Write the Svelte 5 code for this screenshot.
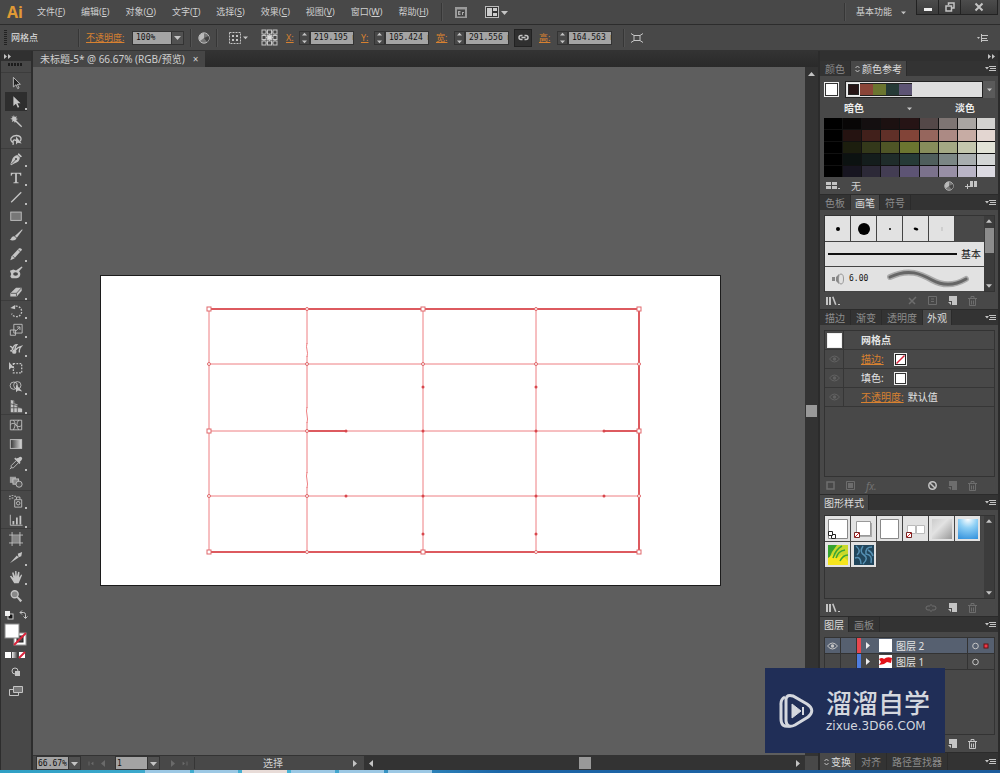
<script>
  const menus = [
    ['文件', 'F'],
    ['编辑', 'E'],
    ['对象', 'O'],
    ['文字', 'T'],
    ['选择', 'S'],
    ['效果', 'C'],
    ['视图', 'V'],
    ['窗口', 'W'],
    ['帮助', 'H'],
  ];

  let opacity = $state('100%');
  let zoom = $state('66.67%');
  let page = $state('1');
  let tool = $state('direct');

  const toolGroups = [
    [
      { id: 'select', label: '选择工具', icon: '<path class="o" style="fill:#222" d="M5 1.5v11l3-2.5 2 4.500 1.500-.8-2-4.200h3.500z"/>' },
      { id: 'direct', label: '直接选择工具', more: true, icon: '<path d="M5 1.500v11l3-2.500 2 4.500 1.700-.8-2-4.200h3.500z"/>' },
      { id: 'wand', label: '魔棒工具', icon: '<path d="M5.500 1l1 2.300 2.500-.8-1 2.300 2.200 1-2.200 1 .8 1L15 14l-1 1-6.300-6-1.200 1-.8-2-2.500 1 .8-2.300L1.500 5.500l2.500-.8-1-2.200 2 .7z"/>' },
      { id: 'lasso', label: '套索工具', icon: '<path class="s w" d="M5 11C2 10 1.500 7 2.500 5.500 5 2 12 2 13.500 5.500c.8 2-.5 4-1.500 4M5 11c-1.500-3 2-4 3-2M5 11l-.5 2.500"/><path d="M8 4v9l2-1.800 4.500.8z"/>' },
    ],
    [
      { id: 'pen', label: '钢笔工具', more: true, icon: '<path d="M11 1l4 4-2 1-3-3zM9.500 3.500l3 3C12 10 10 12 6 13l-3.500 2-1-1L3 10.500C4 6.500 6 4 9.500 3.500z"/><path style="stroke:#484848" class="s" d="M2.500 14L8 8.500"/><circle cx="8" cy="8" r="1.200" fill="#484848"/>' },
      { id: 'type', label: '文字工具', more: true, icon: '<path d="M2 2h12v3.500h-1Q12.800 3.200 11 3.200H9V12q0 1.200 2 1.200v.8H5v-.8q2 0 2-1.200V3.200H5Q3.200 3.200 3 5.500H2z"/>' },
      { id: 'line', label: '直线段工具', more: true, icon: '<path class="s w" d="M2.500 14L14 2.500"/>' },
      { id: 'rect', label: '矩形工具', more: true, icon: '<rect class="s" x="2" y="3.500" width="12" height="9.500" style="fill:#777"/>' },
      { id: 'brush', label: '画笔工具', icon: '<path d="M15 1.500l.5.8L9 11 6.700 9zM6 9.500L8.500 11.800C7.500 14.500 4 15 .8 13.500 3 13 2.500 9 6 9.500z"/>' },
      { id: 'pencil', label: '铅笔工具', more: true, icon: '<path d="M11.500 1.500q2-.8 3.500 1.500l-9 10-4.500 2L3 10.500z"/><path class="s" style="stroke:#555" d="M4 10l2.500 2.500M10.500 3l3 3"/>' },
      { id: 'blob', label: '斑点画笔工具', icon: '<path d="M1 5.500l4-1.500 3 1 6.500-4.500 1 1-4 4.500c3 3 1 8-3 8H3L1.500 12l1-3z"/><ellipse cx="7.500" cy="9" rx="2.800" ry="2" fill="#484848"/>' },
      { id: 'eraser', label: '橡皮擦工具', more: true, icon: '<path d="M8 3h6.500v3.500L9 13H1.500V9.500z"/><path class="s" style="stroke:#555" d="M2 9.500h6.500L14 3.500M8.500 9.500V13"/>' },
    ],
    [
      { id: 'rotate', label: '旋转工具', more: true, icon: '<path class="s w" stroke-dasharray="2 1.500" d="M4.500 4a6 6 0 1 1-1.500 7"/><path d="M1.500 4.500L7 1v5z"/>' },
      { id: 'scale', label: '比例缩放工具', more: true, icon: '<path class="s" d="M5.500 1.500h9.500v10H5.500zM1.500 8h6v6h-6zM8 9l4-4M9 4.500h3.500V8"/>' },
      { id: 'width', label: '宽度工具', more: true, icon: '<path class="s w" d="M1 5q3 0 3 4 1-6 5-6-3 4-2 7 2-4 7-5-3 3-2 7"/><circle cx="6" cy="11" r="2.500"/><circle cx="2.500" cy="10" r="1.200"/>' },
      { id: 'free', label: '自由变换工具', icon: '<path d="M0 1v9l2.500-2.200 4 .7z"/><path class="s w" stroke-dasharray="2 1.500" d="M5 3h9.500v10.500H5z"/>' },
      { id: 'builder', label: '形状生成器工具', more: true, icon: '<circle class="s" cx="5.500" cy="6.500" r="4.200"/><circle class="s" cx="9.500" cy="6" r="4.200"/><path d="M8 5v9l2.200-2 5 1z"/>' },
      { id: 'persp', label: '透视网格工具', more: true, icon: '<path d="M2 1l4 1v3l4 1v3l5 2v4H2z"/><path class="s" style="stroke:#555" d="M2 5.500l8 2M2 10h12M5.500 2v13M9.500 6v9"/>' },
    ],
    [
      { id: 'mesh', label: '网格工具', icon: '<path class="s" d="M1.500 2.500h13v11h-13zM1.500 8q3-4 6.500 0t6.500 0M5 2.500q4 4 0 11M11 2.500q-4 5 0 11"/>' },
      { id: 'grad', label: '渐变工具', icon: '<defs><linearGradient id="tg"><stop stop-color="#333"/><stop offset="1" stop-color="#ddd"/></linearGradient></defs><rect class="s" x="1.500" y="3" width="13" height="10" style="fill:url(#tg)"/>' },
      { id: 'eye', label: '吸管工具', more: true, icon: '<path d="M11 2q2-2 3.500-.5t-.5 3.500l-1.800 1.800 1 1-1.200 1.200-6-6 1.200-1.200 1 1z"/><path class="s" d="M8 5.500L2.500 11v2.500H5L10.500 8M2.500 13.500L1 15"/>' },
      { id: 'blend', label: '混合工具', icon: '<rect x="1" y="2" width="7" height="7" opacity=".7"/><rect class="s" x="4.500" y="4.500" width="6.500" height="6" style="fill:#888"/><circle class="s" cx="11.500" cy="10.500" r="3.500" style="fill:#555"/>' },
    ],
    [
      { id: 'spray', label: '符号喷枪工具', more: true, icon: '<path class="s" d="M6.500 6.500h8V15h-8zM8.500 6V3.500h4V6"/><circle class="s" cx="10.500" cy="10.500" r="2"/><path d="M0 2h2v1H0zM3 1h2v1H3zM3 4h2v1H3zM6 2h2v1H6zM0 5h2v1H0z"/>' },
      { id: 'graph', label: '柱形图工具', more: true, icon: '<path class="s" d="M1.500 2v12h14"/><path d="M4 9h2v4H4zM8 5h2v8H8zM12 3h2v10h-2z"/>' },
    ],
    [
      { id: 'board', label: '画板工具', icon: '<rect x="4" y="4" width="9" height="8" opacity=".5"/><path class="s" d="M3.500 0v16M12.500 0v16M0 3.500h16M0 12.500h16"/>' },
      { id: 'slice', label: '切片工具', more: true, icon: '<path d="M10 3l5-2-1 5-3 1zM9 5l2 2.500L1 14z"/>' },
      { id: 'hand', label: '抓手工具', more: true, icon: '<path d="M1 7l1.500-.5L5 9 3.500 3 5 2.500 7 7.500V1h1.500L9 7.500 10.500 2l1.500.5-.5 6L14 5l1 .8-2.500 6L11 15H6z"/>' },
      { id: 'zoom', label: '缩放工具', icon: '<circle class="s w" cx="6.500" cy="6" r="4" style="fill:#888"/><path d="M8.500 9.500l1.500-1.200L15 13l-2 2z"/>' },
    ],
  ];

  const fields = [
    { id: 'x', label: 'X:', value: '219.195 mm' },
    { id: 'y', label: 'Y:', value: '105.424 mm' },
    { id: 'w', label: '宽:', value: '291.556 mm', cjk: true, link: true },
    { id: 'h', label: '高:', value: '164.563 mm', cjk: true },
  ];

  const base = ['#261415', '#8a4538', '#6b7530', '#263a37', '#5d5474'];
  const shades = [
    ['#000', '#080606', '#140f10', '#1c1111', '#261415', '#544848', '#7e7573', '#a9a5a2', '#d3d2d0'],
    ['#000', '#251311', '#41201b', '#603028', '#824438', '#96665d', '#ac8a84', '#c7aca4', '#e3d6d1'],
    ['#000', '#1c1e0e', '#33381a', '#4f5526', '#6b7530', '#878d5b', '#a4a984', '#c4c7ae', '#e2e3d7'],
    ['#000', '#0c1211', '#141d1c', '#1f2c2a', '#263a37', '#4f5e5c', '#7b8685', '#a8adaf', '#d3d5d5'],
    ['#000', '#171520', '#2c2937', '#433d53', '#5d5474', '#7b728c', '#988fa6', '#b9b4c6', '#dcdae2'],
  ];

  const layers = [
    { name: '图层 2', color: '#e8474f', on: true },
    { name: '图层 1', color: '#4f7de0', art: true },
  ];

  // mesh geometry, relative to the artboard
  const cols = [108, 206, 322, 435, 538];
  const rows = [33, 88, 155, 220, 276];
  const anchors = [
    [108, 33], [322, 33], [538, 33],
    [108, 155], [538, 155],
    [108, 276], [322, 276], [538, 276],
  ];
  const points = [
    [206, 33], [435, 33], [108, 88], [206, 88], [322, 88], [435, 88], [538, 88],
    [206, 155], [108, 220], [206, 220], [538, 220], [206, 276], [435, 276],
  ];
  const handles = [
    [322, 111], [435, 111], [245, 155], [322, 155], [435, 155], [503, 155],
    [245, 220], [322, 220], [435, 220], [503, 220], [322, 258], [435, 258],
  ];
</script>

{#snippet tri(dir)}
  <svg class="tri {dir}" width="7" height="7" viewBox="0 0 7 7"><path d="M0 2h7L3.500 6z" /></svg>
{/snippet}

{#snippet tabs(names, active, cycle)}
  <div class="tabs" role="tablist">
    {#each names as name}
      <button class="tab" class:active={name === active} role="tab" aria-selected={name === active}>
        {#if name === cycle}
          <svg width="5" height="8" viewBox="0 0 5 8"><path class="s" d="M.5 3l2-2 2 2M.5 5l2 2 2-2" /></svg>
        {/if}
        {name}
      </button>
    {/each}
    <button class="flyout" aria-label="面板菜单">
      <svg width="11" height="7" viewBox="0 0 11 7"><path d="M0 2h4L2 4.500zM4 1h7v1H4zM5 3h6v1H5zM4 5h7v1H4z" /></svg>
    </button>
  </div>
{/snippet}

{#snippet none()}
  <svg width="13" height="13" viewBox="0 0 13 13">
    <rect x=".5" y=".5" width="12" height="12" fill="#222" stroke="#eee" />
    <rect x="2" y="2" width="9" height="9" fill="#fff" />
    <path d="M2.500 10.500l8-8" stroke="#d8243c" stroke-width="1.500" />
  </svg>
{/snippet}

{#snippet globe()}
  <svg class="globe" width="12" height="12" viewBox="0 0 12 12">
    <circle cx="6" cy="6" r="5.200" fill="#777" stroke="#bbb" />
    <path d="M6 1a5 5 0 0 0-4 8l4-3z" fill="#bbb" />
    <path d="M6 6l4.500-2A5 5 0 0 1 9 10z" fill="#444" />
  </svg>
{/snippet}

{#snippet fresh()}
  <svg width="9" height="9" viewBox="0 0 9 9"><path d="M1 0h8v9H4V5H1z" /><path d="M0 6h3v3z" /></svg>
{/snippet}

{#snippet trash()}
  <svg width="9" height="10" viewBox="0 0 9 10"><path class="s" d="M0 2.500h9M3 2V.5h3V2M1.500 3v6.500h6V3M3.500 4.500v4M5.500 4.500v4" /></svg>
{/snippet}

{#snippet library()}
  <svg width="14" height="10" viewBox="0 0 14 10"><path d="M0 1h2v8H0zM3 1h2v8H3zM6 1l1.500-.5 3 8L9 9zM12 8h2v1h-2z" /></svg>
{/snippet}

{#snippet eye()}
  <svg width="11" height="8" viewBox="0 0 11 8"><path class="s" d="M.5 4q5-6 10 0-5 6-10 0z" /><circle cx="5.500" cy="4" r="1.700" /></svg>
{/snippet}

<div class="app">
  <header class="menubar">
    <span class="logo">Ai</span>
    <nav>
      {#each menus as [name, key]}
        <button>{name}(<u>{key}</u>)</button>
      {/each}
    </nav>
    <i class="sep"></i>
    <button class="bridge" aria-label="Bridge">
      <svg width="12" height="11" viewBox="0 0 12 11">
        <rect width="12" height="11" fill="#9a9a9a" /><rect x="2" y="2.500" width="8" height="7" fill="#444" />
        <path d="M3.500 4v4M3.500 4.500h2M3.500 6h2M3.500 7.500h2M7.500 5v3M7.500 5.500h1.500" stroke="#aaa" fill="none" />
      </svg>
    </button>
    <button class="arrange" aria-label="排列文档">
      <svg width="14" height="12" viewBox="0 0 14 12">
        <rect x=".5" y=".5" width="13" height="11" fill="#333" stroke="#bbb" />
        <path d="M2 2h5v8H2zM8 2h4v3H8zM8 7h4v3H8z" fill="#ccc" />
      </svg>
      {@render tri('')}
    </button>
    <span class="grow"></span>
    <i class="sep"></i>
    <button class="workspace">基本功能 {@render tri('small')}</button>
    <div class="winbtns">
      <button aria-label="最小化"><svg width="10" height="10" viewBox="0 0 10 10"><path d="M1 6h8v3H1z" /></svg></button>
      <button aria-label="还原">
        <svg width="10" height="10" viewBox="0 0 10 10"><path class="s w" d="M3.500 3V1h5.500v5H7M1 4h5.500v5H1z" /></svg>
      </button>
      <button class="close" aria-label="关闭"><svg width="10" height="10" viewBox="0 0 10 10"><path class="s w" style="stroke-width:2" d="M1.500 1.500l7 7M8.500 1.500l-7 7" /></svg></button>
    </div>
  </header>

  <div class="control">
    <i class="grip"></i>
    <span class="kind">网格点</span>
    <i class="sep"></i>
    <label class="orange wide" for="opacity">不透明度:</label>
    <div class="combo">
      <input id="opacity" bind:value={opacity} />
      <button aria-label="不透明度选项">{@render tri('down')}</button>
    </div>
    <i class="sep"></i>
    <button class="plain" aria-label="重新着色图稿">{@render globe()}</button>
    <i class="sep"></i>
    <button class="plain align" aria-label="对齐">
      <svg width="12" height="12" viewBox="0 0 12 12"><path class="s" stroke-dasharray="2 1" d="M.5.5h11v11H.5z" /><path d="M3 3h2v2H3zM7 3h2v2H7zM3 7h2v2H3zM7 7h2v2H7z" /></svg>
      {@render tri('small')}
    </button>
    <button class="plain ref" aria-label="参考点">
      <svg width="17" height="17" viewBox="0 0 17 17">
        <path class="s" d="M3 3h11v11H3zM3 8.500h11M8.500 3v11" />
        {#each [1, 6.5, 12] as x}
          {#each [1, 6.5, 12] as y}
            <rect class="s" {x} {y} width="4" height="4" style="fill: {x === 6.5 && y === 6.5 ? '#ddd' : '#484848'}" />
          {/each}
        {/each}
      </svg>
    </button>
    {#each fields as f}
      <div class="field" class:cjk={f.cjk}>
        <label class="orange" for={f.id}>{f.label}</label>
        <span class="step">{@render tri('up')}{@render tri('down')}</span>
        <input id={f.id} bind:value={f.value} />
      </div>
      {#if f.link}
        <button class="link" aria-label="约束宽度和高度比例">
          <svg width="11" height="7" viewBox="0 0 11 7"><path class="s w" d="M4.500 5.500H3a2 2 0 0 1 0-4h1.500M6.500 1.500H8a2 2 0 0 1 0 4H6.500M3.500 3.500h4" /></svg>
        </button>
      {/if}
    {/each}
    <i class="sep"></i>
    <button class="plain" aria-label="隔离选中的对象">
      <svg width="12" height="10" viewBox="0 0 12 10"><path class="s" d="M3 2.500h6v5H3zM0 .5l3 2M12 .5l-3 2M0 9.500l3-2M12 9.500l-3-2" /></svg>
    </button>
    <span class="grow"></span>
    <button class="plain" aria-label="控制面板菜单">
      <svg width="11" height="8" viewBox="0 0 11 8"><path d="M0 3h3L1.500 5zM4 0h1v8H4zM5 1h6v1H5zM5 4h5v1H5zM5 6h6v1H5z" /></svg>
    </button>
  </div>

  <main>
    <aside class="tools">
      <div class="collapse"><svg width="7" height="5" viewBox="0 0 7 5"><path d="M0 0l3 2.500L0 5zM4 0l3 2.500L4 5z" /></svg></div>
      <i class="dots"></i>
      {#each toolGroups as group}
        <div class="group">
          {#each group as t}
            <button class="tool" class:on={tool === t.id} class:more={t.more} aria-label={t.label} onclick={() => (tool = t.id)}>
              <svg width="14" height="14" viewBox="0 0 16 16">{@html t.icon}</svg>
            </button>
          {/each}
        </div>
      {/each}
      <div class="paint">
        <svg width="24" height="52" viewBox="0 0 24 52">
          <rect x="4" y="4" width="5" height="5" fill="#111" stroke="#ccc" />
          <rect x="1" y="1" width="5" height="5" fill="#eee" />
          <path class="s" d="M16 2.500h3.500q2 0 2 2V8M18 .5l-2 2 2 2M19.500 6.500l2 2 2-2" />
          <rect x="10" y="23" width="12" height="12" fill="#fff" stroke="#999" />
          <rect x="13" y="26" width="6" height="6" fill="#484848" stroke="#222" />
          <path d="M10 35l12-12" stroke="#d8243c" stroke-width="2" />
          <rect x="1" y="14" width="14" height="14" fill="#fff" stroke="#888" />
          <rect x="1" y="42" width="6" height="6" fill="#fff" />
          <rect x="8" y="42" width="6" height="6" fill="url(#mini)" />
          <rect x="15" y="42" width="6" height="6" fill="#fff" />
          <path d="M15 48l6-6" stroke="#d8243c" stroke-width="2" />
          <defs><linearGradient id="mini"><stop stop-color="#eee" /><stop offset="1" stop-color="#333" /></linearGradient></defs>
        </svg>
      </div>
      <button class="tool" aria-label="绘图模式"><svg width="10" height="10" viewBox="0 0 10 10"><circle class="s" cx="4" cy="4" r="3" /><path d="M4 4h5v5H4z" /></svg></button>
      <button class="tool" aria-label="更改屏幕模式"><svg width="14" height="12" viewBox="0 0 14 12"><path class="s" style="fill:#777" d="M4.500 1.500h9v6h-9z" /><path class="s" d="M4 4.500H.5v6h9V8" /></svg></button>
    </aside>

    <section class="doc">
      <div class="doctabs">
        <button class="doctab">未标题-5* @ 66.67% (RGB/预览) <b>×</b></button>
      </div>
      <div class="stage">
        <div class="canvas">
          <div class="artboard">
            <svg width="619" height="309" viewBox="0 0 619 309">
              {#each cols as x, i}
                <path class="mesh" class:bold={i === 4} d="M{x} {rows[0]}V{rows[4]}" />
              {/each}
              {#each rows as y, i}
                <path class="mesh" class:bold={i % 4 === 0} d="M{cols[0]} {y}H{cols[4]}" />
              {/each}
              <path class="mesh gap" d="M206 68v12M206 132v14M206 197v14" />
              <path class="mesh" d="M206 67q-1 4 0 7t0 7M206 131q-1 4 0 8t0 8M206 196q-1 4 0 8t0 8" />
              <path class="mesh bold" d="M206 155h39M503 155h35" />
              {#each points as [cx, cy]}
                <circle class="pt" {cx} {cy} r="1.5" />
              {/each}
              {#each handles as [cx, cy]}
                <circle class="handle" {cx} {cy} r="1.5" />
              {/each}
              {#each anchors as [x, y]}
                <rect class="pt" x={x - 2} y={y - 2} width="4" height="4" />
              {/each}
            </svg>
          </div>
        </div>
        <div class="vbar">{@render tri('up')}<i></i>{@render tri('down')}</div>
      </div>
      <footer class="status">
        <div class="combo">
          <input aria-label="缩放" bind:value={zoom} />
          <button aria-label="缩放级别">{@render tri('down')}</button>
        </div>
        <div class="nav">{@render tri('left bar')}{@render tri('left')}</div>
        <div class="combo">
          <input aria-label="画板编号" bind:value={page} />
          <button aria-label="画板导航">{@render tri('down')}</button>
        </div>
        <div class="nav">{@render tri('right')}{@render tri('right bar')}</div>
        <div class="current"><span>选择</span>{@render tri('right')}</div>
        <div class="hbar">{@render tri('left')}<i></i>{@render tri('right')}</div>
      </footer>
    </section>

    <aside class="dock">
      <div class="collapse right"><svg width="7" height="5" viewBox="0 0 7 5"><path d="M0 0l3 2.500L0 5zM4 0l3 2.500L4 5z" /></svg></div>

      <section class="panel">
        {@render tabs(['颜色', '颜色参考'], '颜色参考', '颜色参考')}
        <div class="body">
          <div class="harmony">
            <span class="current-color"></span>
            <div class="strip">
              {#each base as c, i}
                <i class:first={i === 0} style="background: {c}"></i>
              {/each}
            </div>
            <button aria-label="协调规则">{@render tri('small')}</button>
          </div>
          <div class="tones"><b>暗色</b>{@render tri('small')}<b>淡色</b></div>
          <div class="shades">
            {#each shades.flat() as c}
              <i style="background: {c}"></i>
            {/each}
          </div>
        </div>
        <div class="foot">
          <svg width="14" height="8" viewBox="0 0 14 8"><path d="M0 0h5v3H0zM6 0h5v3H6zM0 4h5v3H0zM6 4h5v3H6zM12 6h2v1h-2z" /></svg>
          <span class="grow">无</span>
          {@render globe()}
          <svg width="12" height="9" viewBox="0 0 12 9"><path d="M5 0h3v6H5zM9 0h3v6H9zM2 3h1v5H2zM0 5h5v1H0z" /></svg>
          <i></i>
        </div>
      </section>

      <section class="panel">
        {@render tabs(['色板', '画笔', '符号'], '画笔')}
        <div class="body">
          <div class="well">
            <div class="brushes">
              <div class="cells">
                {#each [2, 6, 1] as r}
                  <div class="cell"><svg width="14" height="14" viewBox="0 0 14 14"><circle cx="7" cy="7" {r} fill="#000" /></svg></div>
                {/each}
                <div class="cell"><svg width="14" height="14" viewBox="0 0 14 14"><ellipse cx="7" cy="7" rx="2.400" ry="1.300" transform="rotate(15 7 7)" fill="#000" /></svg></div>
                <div class="cell"><svg width="14" height="14" viewBox="0 0 14 14"><path d="M7 5v4" stroke="#bbb" /></svg></div>
              </div>
              <div class="brush"><i class="basic"></i><span>基本</span></div>
              <div class="brush">
                <svg width="14" height="12" viewBox="0 0 14 12"><path d="M1 4h3v4H1zM5 4l3-3v10L5 8z" fill="#888" /><ellipse cx="10" cy="6" rx="2.500" ry="5" fill="none" stroke="#999" /></svg>
                <span class="num">6.00</span>
                <svg class="stroke" width="84" height="20" viewBox="0 0 84 20">
                  <path d="M3 8C22-1 34 5 45 11s22 6 34-1" stroke="#aaa" stroke-width="6" />
                  <path d="M3 8C22-1 34 5 45 11s22 6 34-1" stroke="#666" stroke-width="3" />
                </svg>
              </div>
            </div>
            <div class="scroller thumb">{@render tri('up')}<i></i>{@render tri('down')}</div>
          </div>
        </div>
        <div class="foot">
          {@render library()}
          <span class="grow"></span>
          <svg class="off" width="9" height="9" viewBox="0 0 9 9"><path class="s w" d="M1 8l7-7M1 2l6 6" /></svg>
          <svg class="off" width="9" height="9" viewBox="0 0 9 9"><path class="s" d="M.5.5h8v8h-8zM3 3h3M3 5.500h3" /></svg>
          {@render fresh()}
          <span class="off">{@render trash()}</span>
          <i></i>
        </div>
      </section>

      <section class="panel">
        {@render tabs(['描边', '渐变', '透明度', '外观'], '外观')}
        <div class="body">
          <div class="well appearance">
            <div class="row"><span class="eye"><i class="sw big"></i></span><b>网格点</b></div>
            <div class="row"><span class="eye">{@render eye()}</span><a class="orange" href="#stroke">描边:</a>{@render none()}</div>
            <div class="row"><span class="eye">{@render eye()}</span><span>填色:</span><i class="sw"></i></div>
            <div class="row"><span class="eye">{@render eye()}</span><a class="orange" href="#opacity">不透明度:</a><span>默认值</span></div>
          </div>
        </div>
        <div class="foot">
          <svg class="off" width="9" height="9" viewBox="0 0 9 9"><path class="s w" d="M1 1h7v7H1z" /></svg>
          <svg class="off" width="9" height="9" viewBox="0 0 9 9"><path class="s" d="M.5.5h8v8h-8z" /><path d="M2 2h5v5H2z" /></svg>
          <em class="off">fx.</em>
          <span class="grow"></span>
          <svg width="9" height="9" viewBox="0 0 9 9"><circle class="s w" cx="4.500" cy="4.500" r="3.700" /><path class="s w" d="M2 2l5 5" /></svg>
          <span class="off">{@render fresh()}</span>
          <span class="off">{@render trash()}</span>
          <i></i>
        </div>
      </section>

      <section class="panel">
        {@render tabs(['图形样式'], '图形样式')}
        <div class="body">
          <div class="well styles">
            <div class="cells">
              <div class="cell">
                <svg width="20" height="20" viewBox="0 0 20 20"><path d="M.5.5h19v19H.5z" fill="#fff" stroke="#888" /><path d="M3.500 15.500h4v4h-4z" fill="#fff" stroke="#222" /><path d="M.5 12.500h4v4h-4z" fill="#fff" stroke="#222" /></svg>
              </div>
              <div class="cell">
                <svg width="20" height="20" viewBox="0 0 20 20"><path d="M4 4h14v14H4z" fill="#aaa" /><path d="M2.500 2.500h14v14h-14z" fill="#fff" stroke="#999" /><path d="M.5 13.500h5v5h-5z" fill="#fff" stroke="#722" /><path d="M1 18l4-4" stroke="#d22" /></svg>
              </div>
              <div class="cell"><svg width="20" height="20" viewBox="0 0 20 20"><path d="M.5.5h18v19H.5z" fill="#fff" stroke="#888" /></svg></div>
              <div class="cell">
                <svg width="20" height="20" viewBox="0 0 20 20"><path d="M1.500 6.500h8v8h-8zM10.500 6.500h8v8h-8z" fill="#fff" stroke="#bbb" /><path d="M.5 13.500h5v5h-5z" fill="#fff" stroke="#722" /><path d="M1 18l4-4" stroke="#d22" /></svg>
              </div>
              <div class="cell"><i class="silver"></i></div>
              <div class="cell"><i class="blue"></i></div>
              <div class="cell">
                <svg width="20" height="20" viewBox="0 0 20 20"><path d="M0 0h20v20H0z" fill="#c9d92b" /><path d="M0 0h9L4 7l-4 9z" fill="#35a32f" /><path d="M0 20V13l6-4 3 4 5-3 6 6v4z" fill="#f6e51d" /><path d="M5 13Q8 4 14 1M8 13q2-7 9-8M12 16q3-6 8-6" stroke="#3aa637" stroke-width="1.500" fill="none" /></svg>
              </div>
              <div class="cell">
                <svg width="20" height="20" viewBox="0 0 20 20"><path d="M0 0h20v20H0z" fill="#21465c" /><path d="M2 1q6 5 1 9M9 1q-4 6 1 9t-1 9M18 2q-7 0-6 7 7 1 5 9M1 13q6-2 6 6M14 5q4 2 5 6" stroke="#5590b3" stroke-width="1.500" fill="none" /></svg>
              </div>
            </div>
            <div class="scroller">{@render tri('up')}{@render tri('down')}</div>
          </div>
        </div>
        <div class="foot">
          {@render library()}
          <span class="grow"></span>
          <svg class="off" width="12" height="8" viewBox="0 0 12 8"><path class="s" d="M5 6H3a2 2 0 0 1 0-4h2M7 2h2a2 2 0 0 1 0 4H7M6 0v2M6 6v2" /></svg>
          {@render fresh()}
          <span class="off">{@render trash()}</span>
          <i></i>
        </div>
      </section>

      <section class="panel">
        {@render tabs(['图层', '画板'], '图层')}
        <div class="body">
          <div class="well layers">
            {#each layers as l}
              <div class="layer" class:on={l.on}>
                <span class="eye">{#if l.on}{@render eye()}{/if}</span>
                <span class="lock"></span>
                <i class="bar" style="background: {l.color}"></i>
                {@render tri('right')}
                <svg width="13" height="13" viewBox="0 0 13 13">
                  <path d="M0 0h13v13H0z" fill="#fff" />
                  {#if l.art}<path d="M0 4q3-2 5 0 3-3 8-1l-1 5-4-1-3 2-5 1 2-3z" fill="#e3121a" />{/if}
                </svg>
                <span class="name">{l.name}</span>
                <span class="target">
                  <svg width="18" height="8" viewBox="0 0 18 8">
                    <circle class="s" cx="3.500" cy="4" r="2.800" />
                    {#if l.on}<rect x="11.500" y="1.500" width="5" height="5" fill="#611" /><rect x="12.500" y="2.500" width="3" height="3" fill="#f0384a" />{/if}
                  </svg>
                </span>
              </div>
            {/each}
          </div>
        </div>
        <div class="foot"><span class="grow"></span>{@render fresh()}{@render trash()}<i></i></div>
      </section>

      <section class="panel last">
        {@render tabs(['变换', '对齐', '路径查找器'], '变换', '变换')}
      </section>
    </aside>
  </main>

  <div class="taskbar">
    {#each [false, false, true, false, false, false] as lit}
      <i class:lit></i>
    {/each}
  </div>

  <div class="brand">
    <svg width="36" height="36" viewBox="0 0 36 36">
      <path d="M6 4Q1.500 6 2 12v14q0 9 9 7" />
      <path d="M7 6q1-5 7-3l14 8q9 6 1 13l-13 8q-8 4-9-4z" />
      <path d="M13 11v14l9-7zM14 14v8" style="fill:#d4d7de;stroke-width:1" />
      <path d="M24 14v8" style="stroke-width:2" />
    </svg>
    <div>
      <strong>溜溜自学</strong>
      <span>zixue.3D66.COM</span>
    </div>
  </div>
</div>

<style>
  :global(body) {
    background: #2d2d2d;
  }

  .app {
    position: relative;
    display: flex;
    flex-direction: column;
    height: 100vh;
    overflow: hidden;
    background: #484848;
    color: #d0d0d0;
    font: 9px/12px 'Noto Sans', 'Noto Sans CJK SC', sans-serif;
  }

  .app :global(*) {
    box-sizing: border-box;
  }

  button {
    display: flex;
    align-items: center;
    justify-content: center;
    padding: 0;
    border: 0;
    background: none;
    color: inherit;
    font: inherit;
    white-space: nowrap;
  }

  input {
    height: 14px;
    padding: 0 0 0 3px;
    border: 1px solid #333;
    background: #a4a4a4;
    color: #111;
    font: 8px/12px 'DejaVu Sans Mono', monospace;
  }

  svg {
    display: block;
    flex: none;
    fill: #c4c4c4;
  }

  .app :global(.s),
  .app :global(.o) {
    fill: none;
    stroke: #c4c4c4;
  }

  .app :global(.w) {
    stroke-width: 1.5;
  }

  .grow {
    flex: 1;
  }

  .sep {
    width: 2px;
    height: 18px;
    border-left: 1px solid #363636;
    border-right: 1px solid #525252;
  }

  .tri.up {
    transform: rotate(180deg);
  }

  .tri.left {
    transform: rotate(90deg);
  }

  .tri.right {
    transform: rotate(-90deg);
  }

  .tri.small {
    width: 5px;
    height: 5px;
  }

  .tri.bar {
    border-bottom: 1px solid #666;
  }

  /* menu bar */
  .menubar {
    display: flex;
    align-items: center;
    flex: none;
    height: 25px;
    padding: 0 2px 0 7px;
    border-bottom: 1px solid #2c2c2c;
  }

  .logo {
    width: 30px;
    color: #e09a35;
    font: bold 16px/22px 'Open Sans', sans-serif;
  }

  .menubar nav {
    display: flex;
    gap: 16px;
    margin-right: 12px;
  }

  .bridge {
    margin: 0 18px 0 12px;
  }

  .arrange {
    gap: 2px;
  }

  .workspace {
    gap: 9px;
    margin: 0 10px;
  }

  .winbtns {
    display: flex;
    align-self: flex-start;
    height: 15px;
    border: 1px solid #222;
    border-top: 0;
    background: linear-gradient(#4c4c4c, #3a3a3a);
  }

  .winbtns button {
    width: 22px;
    border-right: 1px solid #222;
  }

  .winbtns .close {
    width: 36px;
    border: 0;
  }

  .winbtns svg {
    fill: #eee;
  }

  /* control bar */
  .control {
    display: flex;
    align-items: center;
    flex: none;
    height: 26px;
    padding: 0 12px 0 4px;
    border-bottom: 1px solid #333;
  }

  .control .sep {
    margin: 0 6px;
  }

  .grip {
    width: 3px;
    height: 16px;
    margin-right: 4px;
    background: repeating-linear-gradient(#222 0 1px, #484848 1px 2px);
  }

  .kind {
    width: 61px;
    color: #e4e4e4;
  }

  .orange {
    color: #d88130;
    text-decoration: underline;
  }

  .wide {
    width: 46px;
  }

  .combo {
    display: flex;
  }

  .combo input {
    width: 40px;
  }

  .combo button {
    width: 12px;
    border: 1px solid #333;
    border-left: 0;
    background: #515151;
  }

  .plain {
    gap: 2px;
  }

  .align {
    padding: 0 5px;
  }

  .ref {
    padding: 0 8px;
  }

  .field {
    display: flex;
    align-items: center;
    margin-right: 7px;
  }

  .field label {
    width: 13px;
  }

  .field.cjk {
    margin-right: 5px;
  }

  .field.cjk label {
    width: 18px;
  }

  .field input {
    width: 44px;
  }

  .step {
    display: flex;
    flex-direction: column;
    justify-content: space-between;
    align-items: center;
    width: 11px;
    height: 14px;
    border: 1px solid #333;
  }

  .step svg {
    width: 5px;
    height: 5px;
  }

  .link {
    width: 18px;
    height: 18px;
    margin-right: 7px;
    border: 1px solid #222;
    background: #303030;
  }

  /* main area */
  main {
    display: flex;
    flex: 1;
    min-height: 0;
  }

  .tools {
    display: flex;
    flex-direction: column;
    align-items: stretch;
    flex: none;
    width: 33px;
    border: solid #2d2d2d;
    border-width: 0 2px 0 1px;
  }

  .collapse {
    flex: none;
    height: 10px;
    padding: 3px;
    background: #303030;
  }

  .right {
    display: flex;
    justify-content: flex-end;
  }

  .dots {
    width: 15px;
    height: 3px;
    margin: 2px 7px 7px;
    background: repeating-linear-gradient(90deg, #1c1c1c 0 2px, #484848 2px 3px);
  }

  .group {
    box-shadow: 0 -1px #3c3c3c;
  }

  .tool {
    position: relative;
    width: 22px;
    height: 19px;
    margin-left: 4px;
  }

  .tool.on {
    background: #2e2e2e;
  }

  .tool.more::after {
    content: '';
    position: absolute;
    right: 0;
    bottom: 1px;
    width: 2px;
    height: 2px;
    background: #bbb;
  }

  .paint {
    padding: 5px 0 0 3px;
  }

  .doc {
    display: flex;
    flex-direction: column;
    flex: 1;
    min-width: 0;
  }

  .doctabs {
    display: flex;
    flex: none;
    height: 16px;
    background: linear-gradient(#333, #2a2a2a);
  }

  .doctab {
    padding: 0 6px 0 7px;
    background: #464646;
    font-size: 10px;
  }

  .doctab b {
    margin-left: 8px;
    font-weight: 400;
  }

  .stage {
    display: flex;
    flex: 1;
    min-height: 0;
  }

  .canvas {
    position: relative;
    flex: 1;
    overflow: hidden;
    background: #5e5e5e;
  }

  .artboard {
    position: absolute;
    top: 208px;
    left: 67px;
    border: 1px solid #1c1c1c;
    background: #fff;
  }

  .mesh {
    fill: none;
    stroke: #ee7f82;
  }

  .mesh.bold {
    stroke: #dd5a5f;
    stroke-width: 2;
  }

  .mesh.gap {
    stroke: #fff;
    stroke-width: 3;
  }

  .pt {
    fill: #fff;
    stroke: #e0686c;
  }

  .handle {
    fill: #d8474d;
  }

  .vbar {
    display: flex;
    flex-direction: column;
    align-items: center;
    justify-content: space-between;
    width: 13px;
    padding: 4px 0;
    background: #333;
  }

  .vbar i {
    width: 11px;
    height: 12px;
    background: #999;
  }

  .status {
    display: flex;
    align-items: center;
    flex: none;
    height: 15px;
    padding-left: 3px;
    border-top: 1px solid #333;
  }

  .status .combo input {
    width: 33px;
    padding-left: 1px;
  }

  .nav {
    display: flex;
    justify-content: center;
    gap: 6px;
    width: 34px;
  }

  .nav svg {
    fill: #6a6a6a;
  }

  .current {
    display: flex;
    align-items: center;
    width: 170px;
    padding-right: 6px;
    border-left: 1px solid #363636;
    font-size: 10px;
  }

  .current span {
    flex: 1;
    text-align: center;
  }

  .hbar {
    display: flex;
    align-items: center;
    justify-content: space-between;
    flex: 1;
    height: 14px;
    margin-right: 13px;
    padding: 0 4px;
    background: #333;
  }

  .hbar i {
    width: 12px;
    height: 12px;
    background: #999;
  }

  /* panels */
  .dock {
    display: flex;
    flex-direction: column;
    flex: none;
    width: 182px;
    border: solid #2b2b2b;
    border-width: 0 2px;
    background: #2b2b2b;
  }

  .panel {
    flex: none;
    margin-bottom: 1px;
    background: #484848;
  }

  .last {
    flex: 1;
    margin: 0;
  }

  .tabs {
    display: flex;
    height: 15px;
    background: #333;
  }

  .last .tabs {
    height: 17px;
  }

  .tab {
    gap: 2px;
    padding: 0 5px;
    border-right: 1px solid #2b2b2b;
    color: #8c8c8c;
    font-size: 10px;
  }

  .tab.active {
    padding: 0 4px;
    background: #484848;
    color: #dcdcdc;
  }

  .flyout {
    margin: 0 2px 0 auto;
  }

  .body {
    padding: 5px 3px 0 4px;
  }

  .foot {
    display: flex;
    align-items: center;
    gap: 11px;
    height: 17px;
    padding: 0 6px;
    font-size: 10px;
  }

  .foot i {
    width: 4px;
  }

  .foot .globe {
    width: 10px;
    height: 10px;
  }

  .off {
    opacity: 0.3;
  }

  .harmony {
    display: flex;
    height: 17px;
  }

  .current-color {
    width: 15px;
    margin: 1px 6px 1px 0;
    border: 1px solid #eee;
    background: #fff;
    box-shadow: inset 0 0 0 1px #333;
  }

  .strip {
    display: flex;
    flex: 1;
    padding: 1px;
    border: 1px solid #222;
    background: #dedede;
  }

  .strip i {
    width: 13px;
    border: solid #222;
    border-width: 1px 0;
  }

  .strip .first {
    border: 1px solid #eee;
    outline: 1px solid #222;
    outline-offset: -2px;
  }

  .harmony button {
    width: 12px;
    background: #5a5a5a;
  }

  .tones {
    display: flex;
    align-items: center;
    justify-content: space-between;
    height: 20px;
    padding: 0 20px;
    color: #eee;
    font-size: 10px;
  }

  .shades {
    display: grid;
    grid-template-columns: repeat(9, 1fr);
    gap: 1px;
    height: 59px;
    background: #111;
  }

  .well {
    display: flex;
    height: 77px;
    border: 1px solid #333;
  }

  .brushes {
    flex: 1;
  }

  .cells {
    display: flex;
    flex: 1;
    flex-wrap: wrap;
    align-content: flex-start;
  }

  .cell {
    display: flex;
    align-items: center;
    justify-content: center;
    width: 26px;
    height: 26px;
    border: solid #444;
    border-width: 0 1px 1px 0;
    background: #e2e2e2;
  }

  .brush {
    display: flex;
    align-items: center;
    gap: 4px;
    height: 25px;
    padding: 0 3px;
    border-bottom: 1px solid #444;
    background: #e2e2e2;
    color: #111;
    font-size: 10px;
  }

  .brush + .brush {
    padding-left: 6px;
  }

  .basic {
    flex: 1;
    height: 2px;
    background: #111;
  }

  .num {
    width: 34px;
    font: 8px/12px 'DejaVu Sans Mono', monospace;
  }

  .stroke {
    fill: none;
    stroke-linecap: round;
  }

  .scroller {
    display: flex;
    flex-direction: column;
    align-items: center;
    justify-content: space-between;
    width: 10px;
    padding: 2px 0;
    background: #3c3c3c;
  }

  .scroller svg {
    width: 6px;
  }

  .thumb i {
    width: 9px;
    height: 25px;
    margin-bottom: 26px;
    background: #8c8c8c;
  }

  .appearance {
    flex-direction: column;
    height: 147px;
  }

  .row {
    display: flex;
    align-items: center;
    gap: 10px;
    height: 19px;
    border-bottom: 1px solid #363636;
    color: #e4e4e4;
    font-size: 10px;
  }

  .row > :nth-child(2) {
    margin-left: 7px;
  }

  .row a + span {
    margin-left: -6px;
  }

  .eye {
    display: flex;
    align-items: center;
    justify-content: center;
    align-self: stretch;
    width: 19px;
    border-right: 1px solid #363636;
  }

  .row .eye svg {
    opacity: 0.2;
  }

  .sw {
    width: 13px;
    height: 13px;
    border: 1px solid #eee;
    background: #fff;
    box-shadow: inset 0 0 0 1px #333;
  }

  .big {
    width: 15px;
    height: 15px;
    box-shadow: none;
  }

  .styles {
    height: 84px;
  }

  .silver,
  .blue {
    width: 20px;
    height: 20px;
    background: linear-gradient(135deg, #ccc, #e2e2e2 40%, #999);
  }

  .blue {
    background: radial-gradient(circle at 50% 0, #fff, #8fd0f5 40%, #2f8fdc);
  }

  .layers {
    flex-direction: column;
    height: 98px;
  }

  .layer {
    display: flex;
    align-items: center;
    height: 16px;
    border-bottom: 1px solid #333;
    color: #e4e4e4;
    font-size: 10px;
  }

  .layer.on {
    background: #566070;
  }

  .layer .eye,
  .lock {
    align-self: stretch;
    width: 16px;
    border-right: 1px solid #333;
  }

  .bar {
    align-self: stretch;
    width: 4px;
  }

  .layer .tri {
    margin: 0 8px 0 3px;
    fill: #eee;
  }

  .name {
    flex: 1;
    padding-left: 4px;
  }

  .target {
    display: flex;
    align-items: center;
    align-self: stretch;
    width: 27px;
    padding-left: 4px;
    border-left: 1px solid #333;
  }

  .taskbar {
    display: flex;
    gap: 4px;
    flex: none;
    height: 3px;
    padding: 0 568px 0 145px;
    background: linear-gradient(90deg, #2f9fc4 0, #4ab4d6 30%, #1c66a8 50%, #1c5c9c);
  }

  .taskbar i {
    flex: 1;
    background: #9cc8e4;
  }

  .taskbar .lit {
    background: #e8dcd8;
  }

  .brand {
    position: absolute;
    right: 55px;
    bottom: 20px;
    display: flex;
    align-items: center;
    gap: 11px;
    width: 180px;
    height: 85px;
    padding-left: 14px;
    background: #202e57;
    color: #d4d7de;
  }

  .brand path {
    fill: none;
    stroke: #d4d7de;
    stroke-width: 3;
  }

  .brand strong {
    display: block;
    font: 500 26px/30px 'Liberation Sans', 'Noto Sans CJK SC', sans-serif;
  }

  .brand span {
    display: block;
    font: 12px/14px 'DejaVu Sans', sans-serif;
  }
</style>
